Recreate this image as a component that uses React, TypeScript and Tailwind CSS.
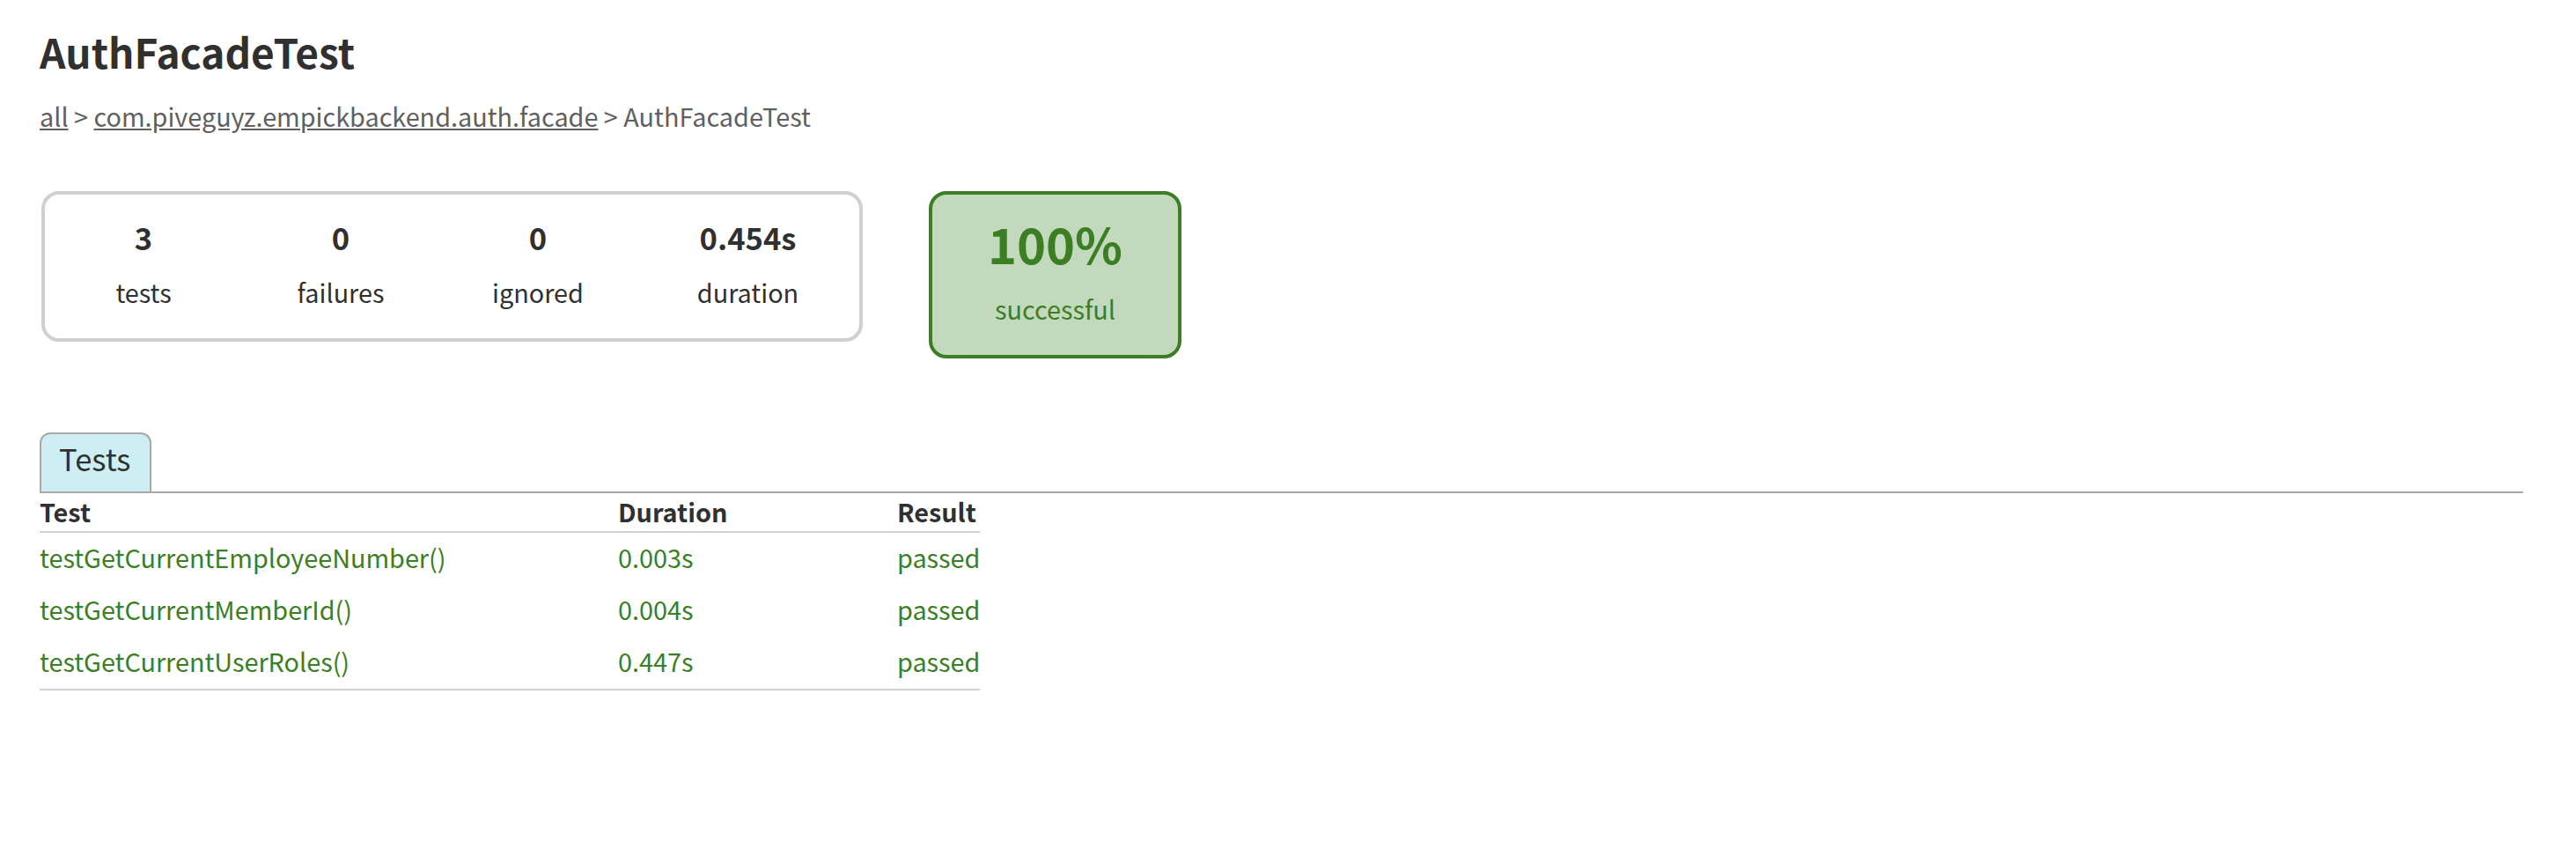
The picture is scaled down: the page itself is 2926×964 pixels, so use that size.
import React from "react";

const rows = [
  { name: "testGetCurrentEmployeeNumber()", duration: "0.003s", result: "passed" },
  { name: "testGetCurrentMemberId()", duration: "0.004s", result: "passed" },
  { name: "testGetCurrentUserRoles()", duration: "0.447s", result: "passed" },
];

const stats = [
  { value: "3", label: "tests", w: "w-[224px]" },
  { value: "0", label: "failures", w: "w-[224px]" },
  { value: "0", label: "ignored", w: "w-[224px]" },
  { value: "0.454s", label: "duration", w: "w-[253px]" },
];

export default function App() {
  return (
    <div className="min-h-[964px] w-full bg-white pl-[45px] pr-[60px] pt-[25px] text-[#303030] font-['Noto_Sans_CJK_KR','Noto_Sans',sans-serif]">
      <h1 className="text-[46px] font-bold leading-[67px] whitespace-nowrap">AuthFacadeTest</h1>
      <div className="mt-[19px] text-[28.8px] leading-[42px] text-[#606060] whitespace-nowrap">
        <a className="underline text-[#606060]" href="#">all</a> &gt;{" "}
        <a className="underline text-[#606060]" href="#">com.piveguyz.empickbackend.auth.facade</a> &gt; AuthFacadeTest
      </div>

      <div className="mt-[64px] flex items-start">
        <div className="ml-[2px] flex h-[171px] w-[933px] rounded-[20px] border-[4px] border-[#d0d0d0] bg-white">
          {stats.map((s) => (
            <div key={s.label} className={`${s.w} pt-[23px] text-center`}>
              <div className="text-[34.56px] font-bold leading-[50px]">{s.value}</div>
              <div className="mt-[17px] text-[28.8px] leading-[42px]">{s.label}</div>
            </div>
          ))}
        </div>
        <div className="ml-[75px] flex h-[190px] w-[287px] flex-col items-center rounded-[20px] border-[4px] border-[#3b7e23] bg-[#c3d9be] pt-[27px] text-[#3b7e23]">
          <div className="text-[56px] font-bold leading-[56px]">100%</div>
          <div className="mt-[26px] text-[28.8px] leading-[42px]">successful</div>
        </div>
      </div>

      <div className="mt-[84px] flex border-b-2 border-[#a8a8a8]">
        <div className="h-[67px] w-[127px] rounded-t-[12px] border-2 border-b-0 border-[#a8a8a8] bg-[#cdeff3] pl-[20px] pt-[6px] text-[34.56px] leading-[42px] text-[#303030]">
          Tests
        </div>
      </div>

      <div className="w-[1068px]">
        <div className="grid h-[45px] grid-cols-[657px_317px_94px] border-b-2 border-[#d0d0d0] text-[28.8px] font-bold leading-[42px]">
          <div>Test</div>
          <div>Duration</div>
          <div>Result</div>
        </div>
        {rows.map((r, i) => (
          <div
            key={r.name}
            className={`grid h-[59px] grid-cols-[657px_317px_94px] text-[28.8px] leading-[55px] text-[#3b7e23] ${i === rows.length - 1 ? "h-[61px] border-b-2 border-[#d0d0d0]" : ""}`}
          >
            <div className="whitespace-nowrap">{r.name}</div>
            <div>{r.duration}</div>
            <div>{r.result}</div>
          </div>
        ))}
      </div>
    </div>
  );
}
